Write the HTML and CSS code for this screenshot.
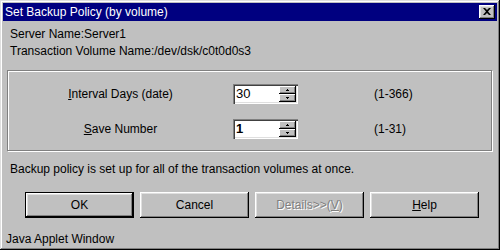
FILE: index.html
```html
<!DOCTYPE html>
<html>
<head>
<meta charset="utf-8">
<link rel="stylesheet" href="styles.css">
</head>
<body>
<div class="window">
  <div class="titlebar">
    <span class="title">Set Backup Policy (by volume)</span>
    <span class="close"><svg width="8" height="7" viewBox="0 0 8 7"><path d="M0 0h2l2 2 2-2h2v0L5 3.5 8 7H6L4 5 2 7H0l3-3.5z" fill="#000"/></svg></span>
  </div>
  <div class="content">
    <div class="info">Server Name:Server1</div>
    <div class="info">Transaction Volume Name:/dev/dsk/c0t0d0s3</div>
    <div class="group">
      <div class="row">
        <span class="lbl"><u>I</u>nterval Days (date)</span>
        <div class="spin"><span class="val">30</span><div class="btns"><span class="sb"><svg width="5" height="2"><rect x="2" y="0" width="1" height="1"/><rect x="1" y="1" width="3" height="1"/></svg></span><span class="sb"><svg width="5" height="2"><rect x="1" y="0" width="3" height="1"/><rect x="2" y="1" width="1" height="1"/></svg></span></div></div>
        <span class="range">(1-366)</span>
      </div>
      <div class="row">
        <span class="lbl"><u>S</u>ave Number</span>
        <div class="spin"><span class="val bold">1</span><div class="btns"><span class="sb"><svg width="5" height="2"><rect x="2" y="0" width="1" height="1"/><rect x="1" y="1" width="3" height="1"/></svg></span><span class="sb"><svg width="5" height="2"><rect x="1" y="0" width="3" height="1"/><rect x="2" y="1" width="1" height="1"/></svg></span></div></div>
        <span class="range">(1-31)</span>
      </div>
    </div>
    <div class="msg">Backup policy is set up for all of the transaction volumes at once.</div>
    <div class="buttons">
      <button class="btn default">OK</button>
      <button class="btn">Cancel</button>
      <button class="btn disabled">Details&gt;&gt;(<u>V</u>)</button>
      <button class="btn"><u>H</u>elp</button>
    </div>
  </div>
  <div class="status">Java Applet Window</div>
</div>
</body>
</html>
```
FILE: styles.css
```css
* { box-sizing: border-box; }
html, body { margin: 0; padding: 0; }
body {
  background: #c0c0c0;
  font-family: "Liberation Sans", Arial, sans-serif;
  font-size: 12px;
  color: #000;
}
.window {
  width: 500px;
  height: 250px;
  display: flex;
  flex-direction: column;
  padding: 3px 2px 2px 2px;
  background: #c0c0c0;
  box-shadow: inset -1px -1px #000, inset 1px 1px #dfdfdf, inset -2px -2px #808080, inset 2px 2px #fff;
}
.titlebar {
  height: 18px;
  margin: 0 1px;
  background: #000080;
  display: flex;
  align-items: center;
  justify-content: space-between;
  padding: 0 2px 0 2px;
}
.title {
  color: #fff;
  font-size: 12px;
  line-height: 18px;
}
.close {
  width: 16px;
  height: 14px;
  background: #c0c0c0;
  box-shadow: inset -1px -1px #000, inset 1px 1px #fff, inset -2px -2px #808080, inset 2px 2px #dfdfdf;
  display: flex;
  align-items: center;
  justify-content: center;
  padding-bottom: 1px;
}
.close svg { display: block; }
.content {
  padding: 0 6px 0 5px;
}
.info {
  line-height: 17px;
  padding-left: 3px;
}
.info:first-child { margin-top: 5px; }
.group {
  margin-top: 10px;
  border: 1px solid #808080;
  box-shadow: inset 1px 1px #fff, 1px 1px #fff;
  padding: 13px 0 11px 0;
  display: grid;
  grid-template-columns: 225px 65px auto;
  row-gap: 15px;
}
.row { display: contents; }
.lbl {
  text-align: center;
  line-height: 20px;
}
.spin {
  height: 20px;
  background: #fff;
  display: flex;
  align-items: stretch;
  padding: 2px 2px 2px 2px;
  box-shadow: inset 1px 1px #808080, inset 2px 2px #404040, inset -1px -1px #fff, inset -2px -2px #dfdfdf;
}
.val {
  flex: 1;
  line-height: 16px;
  font-size: 13px;
  padding-left: 1px;
}
.val.bold { font-weight: bold; }
.btns {
  width: 17px;
  display: flex;
  flex-direction: column;
}
.sb {
  flex: 1;
  background: #c0c0c0;
  box-shadow: inset -1px -1px #000, inset 1px 1px #fff, inset -2px -2px #808080;
  display: flex;
  align-items: center;
  justify-content: center;
}
.sb svg { display: block; fill: #000; }
.range {
  padding-left: 76px;
  line-height: 20px;
}
.msg {
  margin-top: 10px;
  line-height: 17px;
  padding-left: 3px;
}
.buttons {
  margin-top: 14px;
  padding-left: 18px;
  display: flex;
  gap: 6px;
}
.btn {
  width: 109px;
  height: 26px;
  background: #c0c0c0;
  border: none;
  font-family: "Liberation Sans", Arial, sans-serif;
  font-size: 12px;
  color: #000;
  padding: 0;
  box-shadow: inset -1px -1px #000, inset 1px 1px #fff, inset -2px -2px #808080, inset 2px 2px #dfdfdf;
}
.btn.default {
  box-shadow: inset 0 0 0 1px #000, inset -2px -2px #000, inset 2px 2px #fff, inset -3px -3px #808080, inset 3px 3px #dfdfdf;
}
.btn.disabled {
  color: #808080;
  text-shadow: 1px 1px #fff;
}
.status {
  margin-top: auto;
  height: 17px;
  line-height: 17px;
  padding-left: 4px;
}
```
